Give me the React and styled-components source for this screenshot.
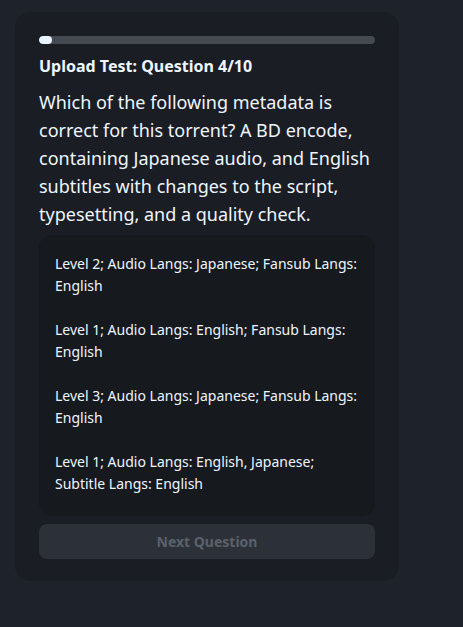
import React, { useState } from "react";
import styled, { createGlobalStyle } from "styled-components";

const GlobalStyle = createGlobalStyle`
    html, body {
        margin: 0;
        padding: 0;
        background: #1e222a;
        font-family: "Noto Sans", "Open Sans", sans-serif;
    }
`;

const options = [
    "Level 2; Audio Langs: Japanese; Fansub Langs: English",
    "Level 1; Audio Langs: English; Fansub Langs: English",
    "Level 3; Audio Langs: Japanese; Fansub Langs: English",
    "Level 1; Audio Langs: English, Japanese; Subtitle Langs: English",
];

export default function App() {
    const [selected, setSelected] = useState(null);
    const current = 4;
    const total = 10;

    return (
        <>
            <GlobalStyle />
            <Page>
                <Card>
                    <Track>
                        <Fill style={{ width: `${((current - 3.6) / total) * 100}%` }} />
                    </Track>
                    <Title>
                        Upload Test: Question {current}/{total}
                    </Title>
                    <Question>
                        Which of the following metadata is correct for this
                        torrent? A BD encode, containing Japanese audio, and
                        English subtitles with changes to the script,
                        typesetting, and a quality check.
                    </Question>
                    <Options>
                        {options.map((o, i) => (
                            <Option
                                key={i}
                                $active={selected === i}
                                onClick={() => setSelected(i)}
                            >
                                {o}
                            </Option>
                        ))}
                    </Options>
                    <NextButton disabled={selected === null}>
                        Next Question
                    </NextButton>
                </Card>
            </Page>
        </>
    );
}

const Page = styled.div`
    min-height: 627px;
    padding: 12px 0 0 15px;
    box-sizing: border-box;
`;

const Card = styled.div`
    width: 384px;
    box-sizing: border-box;
    background: #1a1d24;
    border-radius: 16px;
    padding: 24px 24px 22px;
    display: flex;
    flex-direction: column;
`;

const Track = styled.div`
    height: 8px;
    border-radius: 4px;
    background: #454a52;
    overflow: hidden;
`;

const Fill = styled.div`
    height: 100%;
    min-width: 12px;
    border-radius: 4px;
    background: #e8f4ff;
`;

const Title = styled.h2`
    margin: 11px 0 0;
    font-size: 16px;
    line-height: 22px;
    font-weight: 700;
    color: #eef6ff;
`;

const Question = styled.p`
    margin: 11px 0 0;
    font-size: 18px;
    line-height: 28px;
    color: #eef6ff;
`;

const Options = styled.div`
    margin-top: 7px;
    background: #16191e;
    border-radius: 14px;
    padding: 18px 16px 21px;
    display: flex;
    flex-direction: column;
    gap: 22px;
`;

const Option = styled.div`
    font-size: 14px;
    line-height: 22px;
    color: ${(p) => (p.$active ? "#8fc4ff" : "#eef6ff")};
    cursor: pointer;
`;

const NextButton = styled.button`
    margin-top: 8px;
    height: 35px;
    border: none;
    border-radius: 8px;
    background: #2c3139;
    color: #5b616b;
    font-family: inherit;
    font-size: 14px;
    font-weight: 700;
    cursor: pointer;

    &:disabled {
        cursor: default;
    }
`;
